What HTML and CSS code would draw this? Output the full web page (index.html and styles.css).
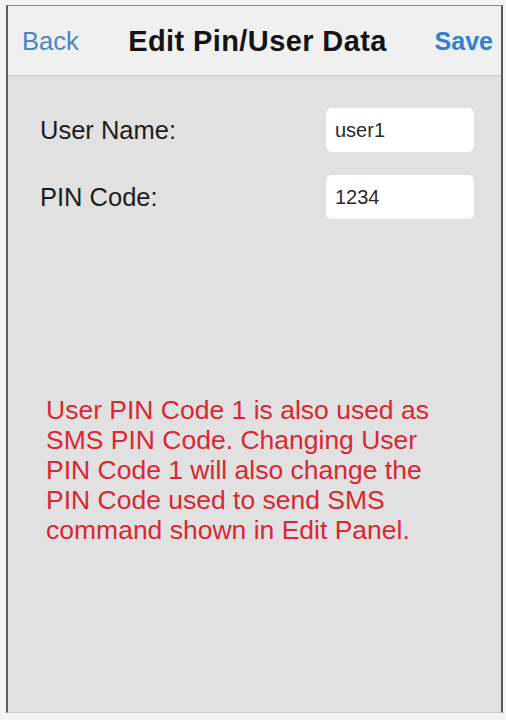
FILE: index.html
```html
<!DOCTYPE html>
<html lang="en">
<head>
<meta charset="utf-8">
<title>Edit Pin/User Data</title>
<link rel="stylesheet" href="styles.css">
</head>
<body>
<div class="frame">
  <header class="navbar">
    <span class="nav-back">Back</span>
    <h1 class="nav-title">Edit Pin/User Data</h1>
    <span class="nav-save">Save</span>
  </header>
  <main class="content">
    <div class="form">
      <label class="field-label" for="username">User Name:</label>
      <div class="field-input" id="username">user1</div>
      <label class="field-label" for="pincode">PIN Code:</label>
      <div class="field-input" id="pincode">1234</div>
    </div>
    <p class="notice">User PIN Code 1 is also used as SMS PIN Code. Changing User PIN Code 1 will also change the PIN Code used to send SMS command shown in Edit Panel.</p>
  </main>
</div>
</body>
</html>
```

FILE: styles.css
```css
html, body {
  margin: 0;
  padding: 0;
  background: #f4f4f4;
}

body {
  font-family: "Liberation Sans", Arial, sans-serif;
  width: 506px;
  height: 720px;
  overflow: hidden;
}

.frame {
  box-sizing: border-box;
  margin: 5px 3px 0 6px;
  width: 497px;
  height: 708px;
  border-left: 2px solid #5e5e5e;
  border-right: 2px solid #5a5a5a;
  border-top: 1px solid #8a8a8a;
  border-bottom: 1px solid #cfcfcf;
  background: #e1e1e1;
  display: flex;
  flex-direction: column;
}

.navbar {
  height: 70px;
  box-sizing: border-box;
  background: #f0f0f0;
  border-bottom: 1px solid #c9c9c9;
  display: flex;
  align-items: center;
  padding: 1px 8px 0 14px;
}

.nav-back {
  font-size: 25.5px;
  color: #4a86c4;
  width: 60px;
}

.nav-title {
  flex: 1;
  margin: 0;
  text-align: center;
  font-size: 29px;
  font-weight: bold;
  letter-spacing: 0.4px;
  color: #141414;
}

.nav-save {
  font-size: 25px;
  font-weight: bold;
  color: #2f80d6;
  width: 60px;
  text-align: right;
}

.content {
  flex: 1;
  padding: 32px 27px 0 32px;
}

.form {
  display: grid;
  grid-template-columns: 1fr 148px;
  row-gap: 23px;
  align-items: center;
}

.field-label {
  font-size: 25.5px;
  color: #1c1c1c;
}

.field-input {
  box-sizing: border-box;
  height: 44px;
  background: #ffffff;
  border-radius: 6px;
  padding: 0 9px;
  display: flex;
  align-items: center;
  font-size: 20px;
  color: #2a2a2a;
}

.notice {
  margin: 176px 0 0 6px;
  width: 405px;
  font-size: 26.5px;
  line-height: 30px;
  color: #dc2631;
}
```
